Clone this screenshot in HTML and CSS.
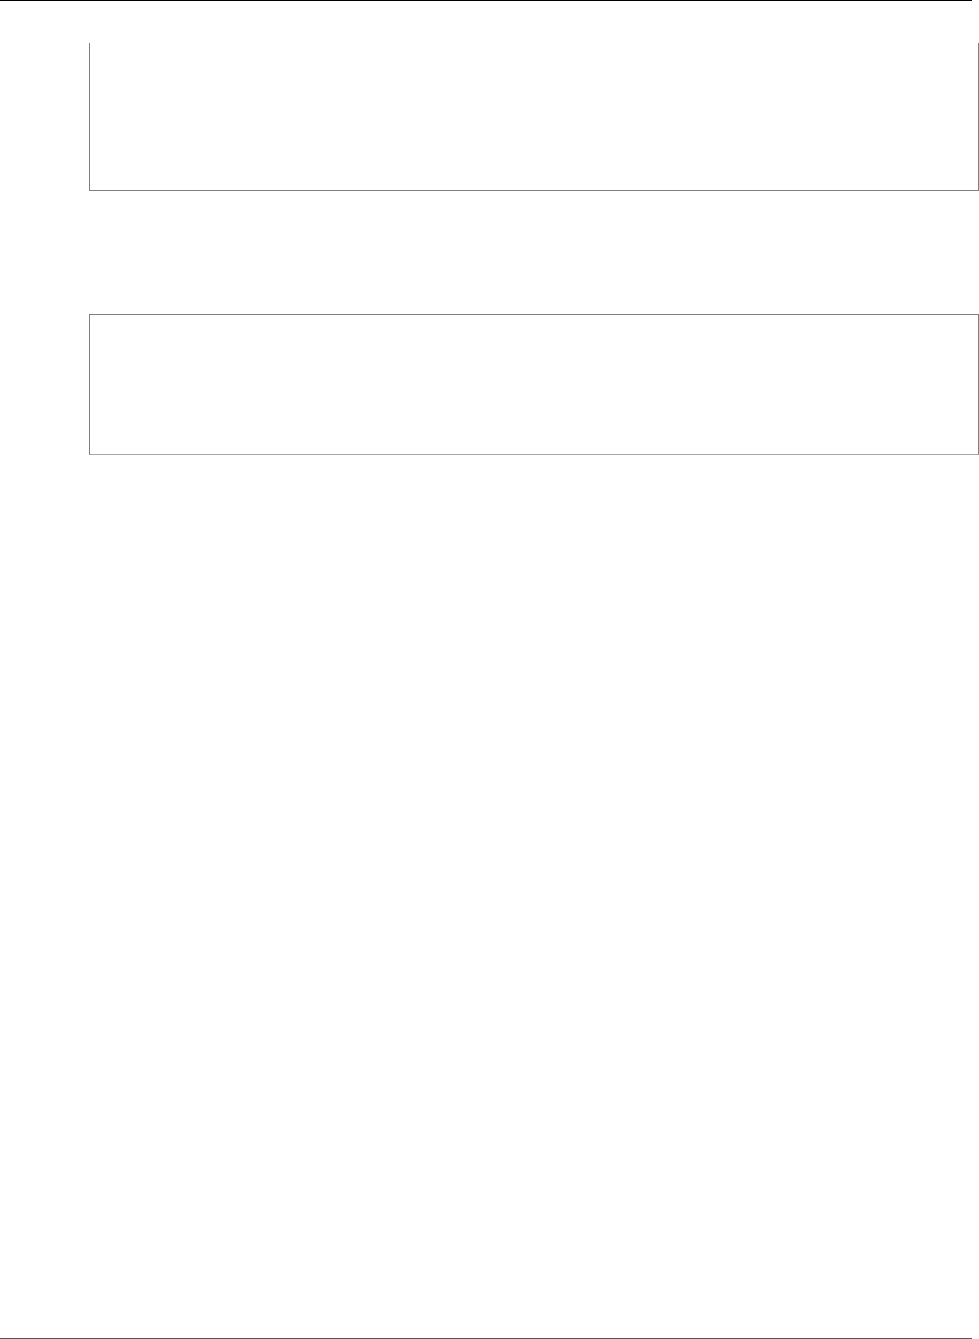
FILE: index.html
```html
<!DOCTYPE html>
<html lang="en">
<head>
  <meta charset="UTF-8" />
  <title>Panels</title>
  <meta name="viewport" content="width=device-width, initial-scale=1.0" />
  <link rel="stylesheet" href="styles.css">
</head>
<body>

  <div class="page">
    <div class="rule rule-top"></div>

    <div class="panels">
      <div class="panel panel-open"></div>
      <div class="panel panel-closed"></div>
    </div>

    <div class="rule rule-bottom"></div>
  </div>

</body>
</html>
```

FILE: styles.css
```css
:root {
  --border-color: #7f7f7f;
}

body {
  margin: 0;
  font-family: 'Liberation Sans', Arial, sans-serif;
  background-color: #fff;
}

.page {
  display: flex;
  flex-direction: column;
  height: 1339px;
}

.rule {
  width: 972px;
  height: 1px;
}

.rule-top {
  background: #000;
}

.rule-bottom {
  margin-top: auto;
  background: #555;
}

.panels {
  display: flex;
  flex-direction: column;
  gap: 123px;
  padding: 42px 0 0 89px;
}

.panel {
  box-sizing: border-box;
  width: 890px;
  border: 1px solid var(--border-color);
}

.panel-open {
  height: 148px;
  border-top: none;
}

.panel-closed {
  height: 141px;
  border-bottom-color: #a6a6a6;
}
```
